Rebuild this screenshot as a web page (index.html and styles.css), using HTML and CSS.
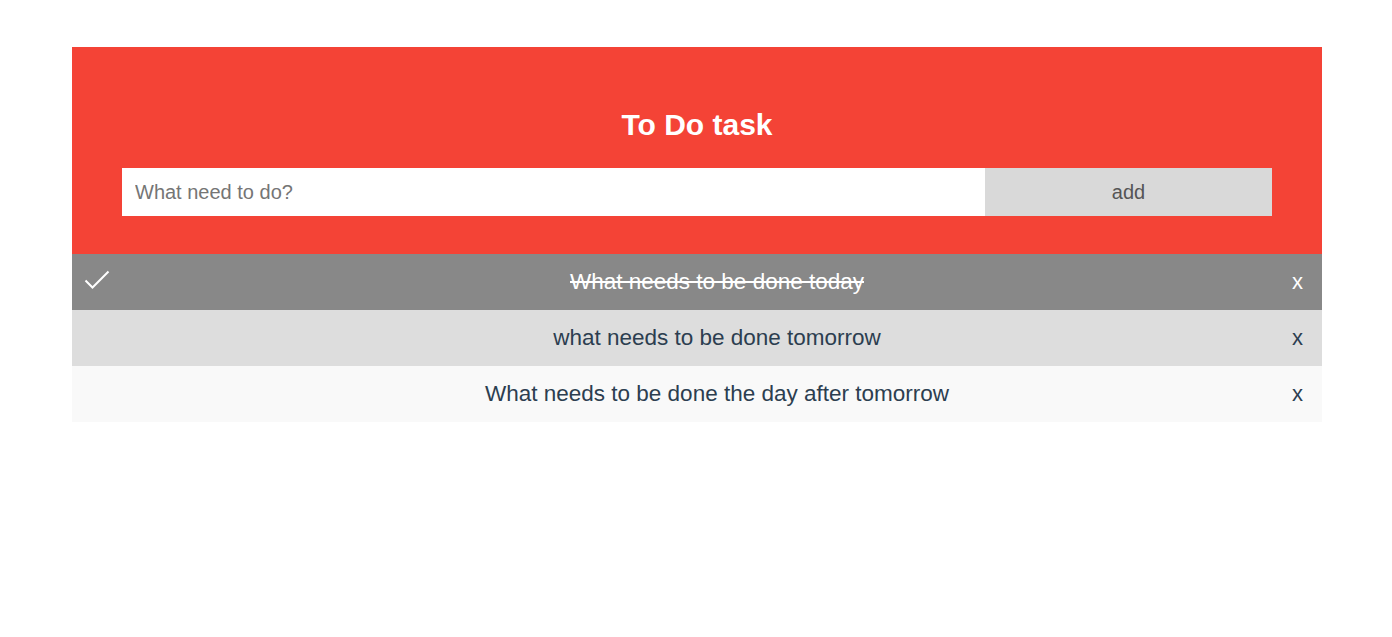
FILE: index.html
```html
<!DOCTYPE html>
<html>
<head>
<meta charset="utf-8">
<link rel="stylesheet" href="styles.css">
</head>
<body>
<div class="app">
  <div class="header">
    <h2 class="title">To Do task</h2>
    <div class="form">
      <input class="input" type="text" placeholder="What need to do?">
      <button class="add">add</button>
    </div>
  </div>
  <ul class="list">
    <li class="item checked">
      <svg class="check" width="26" height="20" viewBox="0 0 26 20"><polyline points="1.5,10.5 8.5,17.5 24.5,1.5" fill="none" stroke="#fff" stroke-width="2"/></svg>
      <span class="text">What needs to be done today</span>
      <span class="close">x</span>
    </li>
    <li class="item even">
      <span class="text">what needs to be done tomorrow</span>
      <span class="close">x</span>
    </li>
    <li class="item odd">
      <span class="text">What needs to be done the day after tomorrow</span>
      <span class="close">x</span>
    </li>
  </ul>
</div>
</body>
</html>
```
FILE: styles.css
```css
html, body {
  margin: 0;
  padding: 0;
  background: #fff;
  font-family: "Liberation Sans", Arial, sans-serif;
}
.app {
  width: 1250px;
  margin: 47px 0 0 72px;
}
.header {
  background: #f44336;
  padding: 60px 50px 38px;
  text-align: center;
}
.title {
  margin: 0 0 25px;
  color: #fff;
  font-size: 30px;
  font-weight: bold;
  line-height: 36px;
}
.form {
  display: flex;
  height: 48px;
}
.input {
  flex: 0 0 863px;
  box-sizing: border-box;
  border: none;
  margin: 0;
  padding: 0 13px;
  height: 48px;
  font-family: "Liberation Sans", Arial, sans-serif;
  font-size: 20px;
  color: #333;
  outline: none;
  background: #fff;
}
.input::placeholder {
  color: #757575;
}
.add {
  flex: 1;
  border: none;
  margin: 0;
  height: 48px;
  background: #d9d9d9;
  color: #555;
  font-family: "Liberation Sans", Arial, sans-serif;
  font-size: 20px;
  padding: 0;
}
.list {
  list-style: none;
  margin: 0;
  padding: 0;
}
.item {
  position: relative;
  height: 56px;
  display: flex;
  align-items: center;
  justify-content: center;
  padding-left: 40px;
  font-size: 22.5px;
  color: #2c3e50;
}
.item.checked {
  background: #888;
  color: #fff;
}
.item.checked .text {
  text-decoration: line-through;
}
.item.even {
  background: #ddd;
}
.item.odd {
  background: #f9f9f9;
}
.check {
  position: absolute;
  left: 12px;
  top: 16px;
}
.close {
  position: absolute;
  right: 19px;
  top: 50%;
  transform: translateY(-50%);
  font-size: 22px;
}
```
